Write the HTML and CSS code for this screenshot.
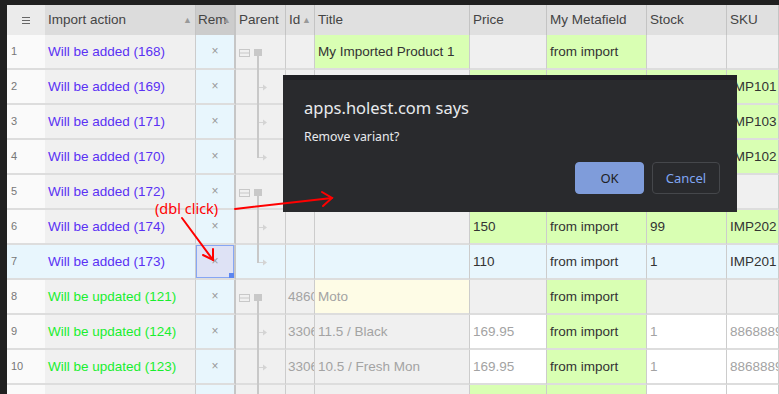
FILE: index.html
```html
<!DOCTYPE html>
<html lang="en">
<head>
  <meta charset="UTF-8">
  <title>Import preview</title>
  <link rel="stylesheet" href="styles.css">
</head>
<body>
  <div class="frame">
    <div class="grid">
      <div class="row head">
        <div class="c num"><svg width="8" height="7" viewBox="0 0 8 7"><path d="M0 0.5h8M0 3.5h8M0 6.5h8" stroke="#666" stroke-width="1"/></svg></div>
        <div class="c act">Import action<span class="sort">&#9650;</span></div>
        <div class="c rem">Rem<span class="sort">&#9650;</span></div>
        <div class="c">Parent</div>
        <div class="c">Id<span class="sort">&#9650;</span></div>
        <div class="c">Title</div>
        <div class="c">Price</div>
        <div class="c">My Metafield</div>
        <div class="c">Stock</div>
        <div class="c">SKU</div>
      </div>

      <div class="row">
        <div class="c num">1</div>
        <div class="c act add">Will be added (168)</div>
        <div class="c rem">&times;</div>
        <div class="c tree"><svg class="t" width="49" height="35"><rect x="3.5" y="14.5" width="10" height="7" fill="none" stroke="#c8c8c8"/><path d="M4 18h9" stroke="#c8c8c8"/><rect x="18" y="14" width="8" height="7" fill="#c8c8c8"/><path d="M22 21v14" stroke="#c8c8c8" stroke-width="2"/></svg></div>
        <div class="c"></div>
        <div class="c g">My Imported Product 1</div>
        <div class="c"></div>
        <div class="c g">from import</div>
        <div class="c"></div>
        <div class="c"></div>
      </div>

      <div class="row">
        <div class="c num">2</div>
        <div class="c act add">Will be added (169)</div>
        <div class="c rem">&times;</div>
        <div class="c tree"><svg class="t" width="49" height="35"><path d="M22 0v35" stroke="#c8c8c8" stroke-width="2"/><path d="M23 17.5h4" stroke="#d4d4d4"/><path d="M27 14.5l4 3-4 3z" fill="#d4d4d4"/></svg></div>
        <div class="c"></div>
        <div class="c">11 / Red</div>
        <div class="c g">120</div>
        <div class="c g">from import</div>
        <div class="c g">10</div>
        <div class="c g">IMP101</div>
      </div>

      <div class="row">
        <div class="c num">3</div>
        <div class="c act add">Will be added (171)</div>
        <div class="c rem">&times;</div>
        <div class="c tree"><svg class="t" width="49" height="35"><path d="M22 0v35" stroke="#c8c8c8" stroke-width="2"/><path d="M23 17.5h4" stroke="#d4d4d4"/><path d="M27 14.5l4 3-4 3z" fill="#d4d4d4"/></svg></div>
        <div class="c"></div>
        <div class="c">12 / Red</div>
        <div class="c g">120</div>
        <div class="c g">from import</div>
        <div class="c g">10</div>
        <div class="c g">IMP103</div>
      </div>

      <div class="row">
        <div class="c num">4</div>
        <div class="c act add">Will be added (170)</div>
        <div class="c rem">&times;</div>
        <div class="c tree"><svg class="t" width="49" height="35"><path d="M22 0v18" stroke="#c8c8c8" stroke-width="2"/><path d="M23 17.5h4" stroke="#d4d4d4"/><path d="M27 14.5l4 3-4 3z" fill="#d4d4d4"/></svg></div>
        <div class="c"></div>
        <div class="c">11 / Blue</div>
        <div class="c g">120</div>
        <div class="c g">from import</div>
        <div class="c g">10</div>
        <div class="c g">IMP102</div>
      </div>

      <div class="row">
        <div class="c num">5</div>
        <div class="c act add">Will be added (172)</div>
        <div class="c rem">&times;</div>
        <div class="c tree"><svg class="t" width="49" height="35"><rect x="3.5" y="14.5" width="10" height="7" fill="none" stroke="#c8c8c8"/><path d="M4 18h9" stroke="#c8c8c8"/><rect x="18" y="14" width="8" height="7" fill="#c8c8c8"/><path d="M22 21v14" stroke="#c8c8c8" stroke-width="2"/></svg></div>
        <div class="c"></div>
        <div class="c g">My Imported Product 2</div>
        <div class="c"></div>
        <div class="c g">from import</div>
        <div class="c"></div>
        <div class="c"></div>
      </div>

      <div class="row">
        <div class="c num">6</div>
        <div class="c act add">Will be added (174)</div>
        <div class="c rem">&times;</div>
        <div class="c tree"><svg class="t" width="49" height="35"><path d="M22 0v35" stroke="#c8c8c8" stroke-width="2"/><path d="M23 17.5h4" stroke="#d4d4d4"/><path d="M27 14.5l4 3-4 3z" fill="#d4d4d4"/></svg></div>
        <div class="c"></div>
        <div class="c"></div>
        <div class="c g">150</div>
        <div class="c g">from import</div>
        <div class="c g">99</div>
        <div class="c g">IMP202</div>
      </div>

      <div class="row sel">
        <div class="c num">7</div>
        <div class="c act add">Will be added (173)</div>
        <div class="c rem cur">&times;</div>
        <div class="c tree"><svg class="t" width="49" height="35"><path d="M22 0v18" stroke="#c8c8c8" stroke-width="2"/><path d="M23 17.5h4" stroke="#d4d4d4"/><path d="M27 14.5l4 3-4 3z" fill="#d4d4d4"/></svg></div>
        <div class="c"></div>
        <div class="c"></div>
        <div class="c">110</div>
        <div class="c">from import</div>
        <div class="c">1</div>
        <div class="c">IMP201</div>
      </div>

      <div class="row">
        <div class="c num">8</div>
        <div class="c act upd">Will be updated (121)</div>
        <div class="c rem">&times;</div>
        <div class="c tree"><svg class="t" width="49" height="35"><rect x="3.5" y="14.5" width="10" height="7" fill="none" stroke="#c8c8c8"/><path d="M4 18h9" stroke="#c8c8c8"/><rect x="18" y="14" width="8" height="7" fill="#c8c8c8"/><path d="M22 21v14" stroke="#c8c8c8" stroke-width="2"/></svg></div>
        <div class="c id">4860123</div>
        <div class="c y dim">Moto</div>
        <div class="c"></div>
        <div class="c g">from import</div>
        <div class="c"></div>
        <div class="c"></div>
      </div>

      <div class="row">
        <div class="c num">9</div>
        <div class="c act upd">Will be updated (124)</div>
        <div class="c rem">&times;</div>
        <div class="c tree"><svg class="t" width="49" height="35"><path d="M22 0v35" stroke="#c8c8c8" stroke-width="2"/><path d="M23 17.5h4" stroke="#d4d4d4"/><path d="M27 14.5l4 3-4 3z" fill="#d4d4d4"/></svg></div>
        <div class="c id">3306123</div>
        <div class="c dim">11.5 / Black</div>
        <div class="c w dim">169.95</div>
        <div class="c g">from import</div>
        <div class="c w dim">1</div>
        <div class="c w dim">88688890</div>
      </div>

      <div class="row">
        <div class="c num">10</div>
        <div class="c act upd">Will be updated (123)</div>
        <div class="c rem">&times;</div>
        <div class="c tree"><svg class="t" width="49" height="35"><path d="M22 0v35" stroke="#c8c8c8" stroke-width="2"/><path d="M23 17.5h4" stroke="#d4d4d4"/><path d="M27 14.5l4 3-4 3z" fill="#d4d4d4"/></svg></div>
        <div class="c id">3306124</div>
        <div class="c dim">10.5 / Fresh Mon</div>
        <div class="c w dim">169.95</div>
        <div class="c g">from import</div>
        <div class="c w dim">1</div>
        <div class="c w dim">88688891</div>
      </div>

      <div class="row">
        <div class="c num">11</div>
        <div class="c act upd">Will be updated (125)</div>
        <div class="c rem">&times;</div>
        <div class="c tree"><svg class="t" width="49" height="35"><path d="M22 0v35" stroke="#c8c8c8" stroke-width="2"/></svg></div>
        <div class="c id"></div>
        <div class="c"></div>
        <div class="c g"></div>
        <div class="c g"></div>
        <div class="c w"></div>
        <div class="c w"></div>
      </div>
    </div>

    <div class="dialog">
      <div class="dlg-title">apps.holest.com says</div>
      <div class="dlg-msg">Remove variant?</div>
      <div class="dlg-btns">
        <button class="btn ok">OK</button>
        <button class="btn cancel">Cancel</button>
      </div>
    </div>

    <div class="note">(dbl click)</div>
    <svg class="arrows" width="779" height="394" viewBox="0 0 779 394">
      <g stroke="#f00" stroke-width="2" fill="none" stroke-linecap="round">
        <path d="M235 209L332 198"/>
        <path d="M322 192l10 6-9 8"/>
        <path d="M182 218L213 260"/>
        <path d="M203 255l10 5 0-11"/>
      </g>
    </svg>
  </div>
</body>
</html>
```

FILE: styles.css
```css
body {
  margin: 0;
  background: #202020;
  font-family: "Liberation Sans", Arial, sans-serif;
  overflow: hidden;
}
.frame {
  position: relative;
  width: 779px;
  height: 394px;
  padding: 5px 0 0 7px;
  box-sizing: border-box;
  overflow: hidden;
}
.grid {
  background: #f0f0f0;
  height: 389px;
}
.row {
  display: grid;
  grid-template-columns: 38px 151px 40px 50px 29px 155px 77px 100px 80px 1fr;
}
.c {
  box-sizing: border-box;
  height: 35px;
  line-height: 33px;
  padding: 0 3px;
  border-bottom: 2px solid #dddddd;
  border-right: 1px solid #cccccc;
  background: #f0f0f0;
  color: #333;
  font-size: 13.5px;
  white-space: nowrap;
  overflow: hidden;
  position: relative;
}
.c.num {
  background: #fafafa;
  border-right: none;
  color: #777;
  font-size: 11px;
  padding-left: 4px;
}
.c.rem {
  background: #e8f6fd;
  border-right: 2px solid #c6c6c6;
  text-align: center;
  color: #999;
  font-size: 12px;
  padding: 0;
}
.c.tree {
  padding: 0;
  overflow: visible;
}
.t {
  display: block;
  overflow: visible;
}
.c.act.add { color: #5a31f4; }
.c.act.upd { color: #19ee2f; }
.c.g { background: #d9ffb3; }
.c.y { background: #fefce6; }
.c.w { background: #fff; }
.c.dim, .c.id { color: #a3a3a3; }
.c.id { padding: 0 2px; overflow: hidden; text-overflow: clip; }

.row.head .c {
  height: 30px;
  line-height: 30px;
  border-bottom: none;
  background: #e0e0e0;
  border-right-color: #c4c4c4;
  color: #444;
}
.row.head .c.num {
  background: #ebebeb;
  display: flex;
  align-items: center;
  justify-content: center;
  padding: 0;
}
.row.head .c.act { background: #dcdcdc; }
.row.head .c.rem {
  background: #cccccc;
  color: #444;
  font-size: 13.5px;
  text-align: left;
  padding-left: 2px;
}
.sort {
  position: absolute;
  right: 3px;
  top: 0;
  font-size: 9px;
  color: #999;
}

.row.sel .c { background: #e8f6fd; }
.row.sel .c.cur {
  background: #dee2f5;
  box-shadow: inset 0 0 0 1px #86a6f4;
}
.row.sel .c.cur::after {
  content: "";
  position: absolute;
  right: 0;
  bottom: 0;
  width: 5px;
  height: 5px;
  background: #5b86f0;
}

.dialog {
  position: absolute;
  left: 283px;
  top: 75px;
  width: 454px;
  height: 137px;
  box-sizing: border-box;
  background: #292a2d;
  border-top: 5px solid #202124;
  padding: 17px 17px 0 21px;
  font-family: "Noto Sans", "Open Sans", sans-serif;
  color: #e8eaed;
}
.dlg-title {
  font-size: 16.5px;
  line-height: 22px;
}
.dlg-msg {
  font-size: 12.3px;
  line-height: 18px;
  margin-top: 9px;
}
.dlg-btns {
  display: flex;
  justify-content: flex-end;
  gap: 8px;
  margin-top: 16px;
}
.btn {
  height: 32px;
  border-radius: 4px;
  font-family: "Noto Sans", "Open Sans", sans-serif;
  font-size: 13px;
  padding: 0;
}
.btn.ok {
  width: 69px;
  background: #7f9cda;
  border: 1px solid #7f9cda;
  color: #202124;
}
.btn.cancel {
  width: 68px;
  background: #292a2d;
  border: 1px solid #45474b;
  color: #80a6f2;
}

.note {
  position: absolute;
  left: 155px;
  top: 198px;
  color: #f00;
  font-family: "Noto Sans", "Open Sans", sans-serif;
  font-size: 14.5px;
  line-height: 20px;
}
.arrows {
  position: absolute;
  left: 0;
  top: 0;
  pointer-events: none;
}
```
